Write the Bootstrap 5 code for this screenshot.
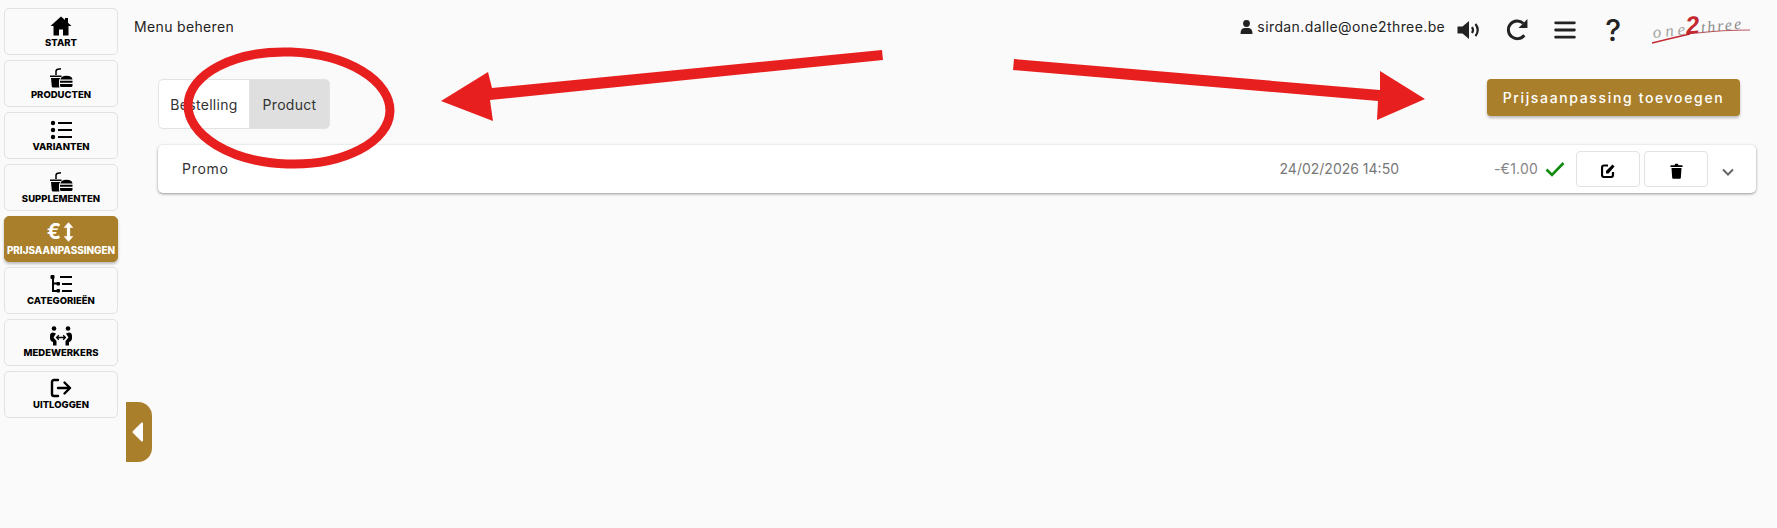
<!DOCTYPE html>
<html lang="nl">
<head>
    <meta charset="UTF-8">
    <meta name="viewport" content="width=device-width, initial-scale=1.0">
    <title>Menu beheren</title>
    <link href="https://cdn.jsdelivr.net/npm/bootstrap@5.3.2/dist/css/bootstrap.min.css" rel="stylesheet">
    <style>
        body {
            background-color: #fafafa;
            font-family: "Inter", "Liberation Sans", sans-serif;
            color: #212529;
            height: 528px;
            overflow: hidden;
        }
        .page-wrap { height: 528px; }

        /* left rail */
        .side-rail {
            width: 126px;
            flex: 0 0 126px;
            padding: 8px 8px 0 4px;
            gap: 5px;
        }
        .rail-btn {
            height: 47px;
            padding: 0;
            background: #fafafa;
            border: 1px solid #e2e2e2;
            border-radius: 5px;
            color: #000;
            font-size: 9.5px;
            font-weight: 800;
            line-height: 11px;
            text-transform: uppercase;
            white-space: nowrap;
        }
        .rail-btn svg { display: block; height: 20px; width: 24px; margin-bottom: 1px; }
        .rail-btn.rail-on {
            height: 45.7px;
            background: #a97f2c;
            border-color: #a97f2c;
            color: #fff;
            box-shadow: 0 2px 3px rgba(0,0,0,.25);
            font-size: 9.9px;
            line-height: 13px;
        }
        .rail-on .euro-sign { font-size: 21px; line-height: 24px; font-weight: 700; }
        .rail-on svg { width: 13px; height: 22px; margin: 0 0 0 1px; }
        .rail-toggle {
            position: absolute;
            left: 126px;
            top: 402px;
            width: 26px;
            height: 60px;
            background: #a97f2c;
            border-radius: 0 14px 14px 0;
            padding-left: 6px;
        }

        /* main part */
        .top-bar {
            height: 55px;
            padding: 0 26px 2px 8px;
            font-size: 14px;
            color: #222;
        }
        .top-title { letter-spacing: .35px; }
        .top-user { margin-right: 4px; }
        .top-mail { margin-right: 12px; letter-spacing: .4px; }
        .top-icon { display: block; margin-top: 6px; }
        .icon-redo { margin-left: 24px; }
        .icon-bars { margin-left: 25px; }
        .top-help {
            margin: 6px 0 0 29px;
            font-size: 30px;
            line-height: 28px;
            font-weight: 500;
            color: #222;
        }
        .brand-mark {
            width: 99px;
            height: 29px;
            margin: 6px 0 0 31px;
            position: relative;
        }
        .brand-name {
            position: absolute;
            left: 0;
            top: -5px;
            width: 99px;
            height: 28px;
            line-height: 28px;
            font-family: "Liberation Serif", serif;
            font-style: italic;
            white-space: nowrap;
            color: #a3a3a3;
            transform: rotate(-6deg);
        }
        .brand-one { font-size: 17px; letter-spacing: 4px; }
        .brand-two { color: #c3272f; font-size: 25px; font-weight: 700; font-family: "Liberation Sans", sans-serif; margin: 0 1px 0 -3px; }
        .brand-three { font-size: 16px; letter-spacing: 2px; color: #8c8c8c; }
        .brand-mark svg { position: absolute; left: 0; top: 0; }

        .work-area { padding: 24px 21px 0 32px; }
        .kind-switch .btn {
            height: 50px;
            font-size: 14px;
            color: #333;
            letter-spacing: .3px;
            border-color: #e2e2e2;
            background: #fff;
            padding: 0;
            border-radius: 5px;
        }
        .kind-switch .btn:first-child { width: 92px; }
        .kind-switch .btn:last-child { width: 81px; background: #dfdfdf; }
        .add-price-btn {
            width: 253px;
            height: 37px;
            margin-right: 16px;
            padding: 0;
            background: #a97f2c;
            border: 0;
            border-radius: 4px;
            color: #fff;
            font-size: 14px;
            font-weight: 500;
            letter-spacing: 1.65px;
            box-shadow: 0 2px 3px rgba(0,0,0,.25);
        }
        .promo-card {
            margin-top: 16px;
            height: 48px;
            border: 0;
            border-radius: 5px;
            box-shadow: 0 1px 3px rgba(0,0,0,.4);
            padding-left: 24px;
            font-size: 14px;
        }
        .promo-name { color: #333; letter-spacing: .7px; margin-top: -2px; }
        .promo-date { margin: -2px 95px 0 auto; color: #777; }
        .promo-amount { color: #858585; margin: -2px 7px 0 0; letter-spacing: .2px; }
        .promo-btn {
            width: 64px;
            height: 36px;
            padding: 0;
            background: #fff;
            border: 1px solid #e2e2e2;
            border-radius: 4px;
            margin-left: 4px;
        }
        .promo-btn.first-btn { margin-left: 11px; }
        .promo-chevron { margin: 6px 22px 0 14px; }

        /* red marks drawn over the screenshot */
        .mark-layer { position: absolute; left: 0; top: 0; pointer-events: none; }
    </style>
</head>
<body>
    <div class="d-flex page-wrap position-relative">
        <nav class="side-rail d-flex flex-column">
            <button class="btn rail-btn d-flex flex-column align-items-center justify-content-center">
                <svg viewBox="0 0 24 20"><path d="M12 0.5 1.500 10h3v9.500h5.500v-6h4v6h5.500V10h3l-3.500-3.200V2h-3v2.100z" fill="#000"/></svg>
                Start
            </button>
            <button class="btn rail-btn d-flex flex-column align-items-center justify-content-center">
                <svg viewBox="0 0 24 20"><use href="#food-icon"/></svg>
                Producten
            </button>
            <button class="btn rail-btn d-flex flex-column align-items-center justify-content-center">
                <svg viewBox="0 0 24 20"><path d="M9 3h14M9 10h14M9 17h14" stroke="#000" stroke-width="2.200"/><circle cx="4" cy="3" r="2.200"/><circle cx="4" cy="10" r="2.200"/><circle cx="4" cy="17" r="2.200"/></svg>
                Varianten
            </button>
            <button class="btn rail-btn d-flex flex-column align-items-center justify-content-center">
                <svg viewBox="0 0 24 20"><use href="#food-icon"/></svg>
                Supplementen
            </button>
            <button class="btn rail-btn rail-on d-flex flex-column align-items-center justify-content-center">
                <span class="d-flex align-items-center">
                    <span class="euro-sign">€</span>
                    <svg viewBox="0 0 12 20"><path d="M6 1 1.500 6h3v8h-3L6 19l4.500-5h-3V6h3z" fill="#fff"/></svg>
                </span>
                Prijsaanpassingen
            </button>
            <button class="btn rail-btn d-flex flex-column align-items-center justify-content-center">
                <svg viewBox="0 0 24 20"><path d="M4 2v15h5M4 9.500h5M11 3h12M13 10h10M13 17h10" stroke="#000" stroke-width="2" fill="none"/><rect x="1.500" y="1" width="4" height="4" rx="1"/><rect x="7.500" y="8" width="3.500" height="3.500" rx="1"/><rect x="7.500" y="15" width="3.500" height="3.500" rx="1"/></svg>
                Categorieën
            </button>
            <button class="btn rail-btn d-flex flex-column align-items-center justify-content-center">
                <svg viewBox="0 0 24 20"><circle cx="5" cy="2.500" r="2.300"/><circle cx="19" cy="2.500" r="2.300"/><path d="M4 6.500q-3 0-3 3.500v2q0 3 3 4v3.500h3.500V15L4.500 11.500 7 7.500zM20 6.500q3 0 3 3.500v2q0 3-3 4v3.500h-3.500V15l3-3.500L17 7.500z"/><path d="M8 11.500h8M9.800 9.300 7.600 11.500l2.200 2.200M14.200 9.300l2.200 2.200-2.200 2.200" stroke="#000" stroke-width="1.300" fill="none"/></svg>
                Medewerkers
            </button>
            <button class="btn rail-btn d-flex flex-column align-items-center justify-content-center">
                <svg viewBox="0 0 24 20"><path d="M9 2H5Q3 2 3 4v12q0 2 2 2h4" stroke="#000" stroke-width="2.400" fill="none" stroke-linecap="round"/><path d="M9 10h12M15.500 4.500 21 10l-5.500 5.500" stroke="#000" stroke-width="2.400" fill="none" stroke-linecap="round" stroke-linejoin="round"/></svg>
                Uitloggen
            </button>
        </nav>
        <div class="rail-toggle d-flex align-items-center">
            <svg width="12" height="20" viewBox="0 0 12 20"><path d="M11 1.500v17a1 1 0 0 1-1.700.7L1 11a1.500 1.500 0 0 1 0-2l8.300-8.200A1 1 0 0 1 11 1.500z" fill="#fff"/></svg>
        </div>

        <main class="flex-grow-1">
            <header class="top-bar d-flex align-items-center">
                <span class="top-title">Menu beheren</span>
                <svg width="13" height="14" viewBox="0 0 13 14" class="ms-auto top-user"><circle cx="6.500" cy="3.500" r="3.400" fill="#222"/><path d="M0.500 14q0-6 4-6h4q4 0 4 6z" fill="#222"/></svg>
                <span class="top-mail">sirdan.dalle@one2three.be</span>
                <svg width="25" height="20" viewBox="0 0 25 20" class="top-icon"><path d="M0.500 6.500h5L12 1v18L5.500 13.500h-5z" fill="#222"/><path d="M15 7q2 3 0 6M18.500 4q4.500 6 0 12" stroke="#222" stroke-width="2.200" fill="none"/></svg>
                <svg width="23" height="23" viewBox="0 0 22 22" class="top-icon icon-redo"><path d="M17.500 16.500A8.500 8.500 0 1 1 16.500 5" stroke="#222" stroke-width="2.800" fill="none"/><path d="M20.500 1v8.500H12z" fill="#222"/></svg>
                <svg width="22" height="20" viewBox="0 0 20 18" class="top-icon icon-bars"><path d="M1.500 2.500h17M1.500 9h17M1.500 15.500h17" stroke="#222" stroke-width="2.600" stroke-linecap="round"/></svg>
                <span class="top-help">?</span>
                <div class="brand-mark">
                    <span class="brand-name"><span class="brand-one">one</span><span class="brand-two">2</span><span class="brand-three">three</span></span>
                    <svg width="99" height="29" viewBox="0 0 99 29"><path d="M0 28Q20 23 38 19" stroke="#c3272f" stroke-width="1.600" fill="none"/><path d="M45 18Q70 15 98 15" stroke="#b9565b" stroke-width="1.200" fill="none"/></svg>
                </div>
            </header>

            <div class="work-area">
                <div class="d-flex justify-content-between align-items-start">
                    <div class="btn-group kind-switch" role="group">
                        <button class="btn">Bestelling</button>
                        <button class="btn">Product</button>
                    </div>
                    <button class="btn add-price-btn">Prijsaanpassing toevoegen</button>
                </div>

                <div class="card promo-card flex-row align-items-center">
                    <span class="promo-name">Promo</span>
                    <span class="promo-date">24/02/2026 14:50</span>
                    <span class="promo-amount">-€1.00</span>
                    <svg width="20" height="16" viewBox="0 0 20 16"><path d="M1.500 8.500 7 14 18.500 2" stroke="#128a12" stroke-width="2.600" fill="none"/></svg>
                    <button class="btn promo-btn first-btn"><svg width="15" height="15" viewBox="0 0 15 15"><path d="M7 2.500H3Q1 2.500 1 4.500v7.500q0 2 2 2h7q2 0 2-2V9" stroke="#000" stroke-width="2.200" fill="none"/><path d="M5 10.500V8l6.500-6.500 2 2L7.500 10.500z" fill="#000"/></svg></button>
                    <button class="btn promo-btn"><svg width="13" height="16" viewBox="0 0 13 16"><path d="M0.500 2.200h4l.7-1.500h2.600l.7 1.500h4v1.800H.5zM1.500 5h10l-.7 10a1 1 0 0 1-1 .8H3.200a1 1 0 0 1-1-.8z" fill="#000"/></svg></button>
                    <svg class="promo-chevron" width="12" height="8" viewBox="0 0 12 8"><path d="M1 1.500 6 6.500l5-5" stroke="#666" stroke-width="2" fill="none"/></svg>
                </div>
            </div>
        </main>

        <svg class="mark-layer" width="1777" height="528" viewBox="0 0 1777 528">
            <ellipse cx="289" cy="108" rx="101" ry="56" fill="none" stroke="#e81f1f" stroke-width="9" transform="rotate(2 289 108)"/>
            <path d="M882 50 492 88 488 72 441 101 493 121 490 100 883 60z" fill="#e81f1f"/>
            <path d="M1014 59 1380 90 1380 71 1425 99 1377 120 1378 101 1013 70z" fill="#e81f1f"/>
        </svg>
    </div>

    <svg width="0" height="0" class="position-absolute">
        <symbol id="food-icon" viewBox="0 0 24 20">
            <path d="M1 7.500h11.500v1.500H1zM2 10h9.500q-1.500 1-1.500 3v4q0 1 .5 2.500H4q-1 0-1.200-1z"/>
            <path d="M7 7V3.500Q7 1.500 9 1.200L12 .8" stroke="#000" stroke-width="1.500" fill="none"/>
            <path d="M11.500 11.500Q12 7.800 17.500 7.800T23.500 11.500zM11 12.800h12.500v2H11zM11 16h12.500v1.500q0 1.500-1.500 1.500H12.500q-1.500 0-1.500-1.500z"/>
        </symbol>
    </svg>

    <script src="https://cdn.jsdelivr.net/npm/bootstrap@5.3.2/dist/js/bootstrap.bundle.min.js"></script>
</body>
</html>
